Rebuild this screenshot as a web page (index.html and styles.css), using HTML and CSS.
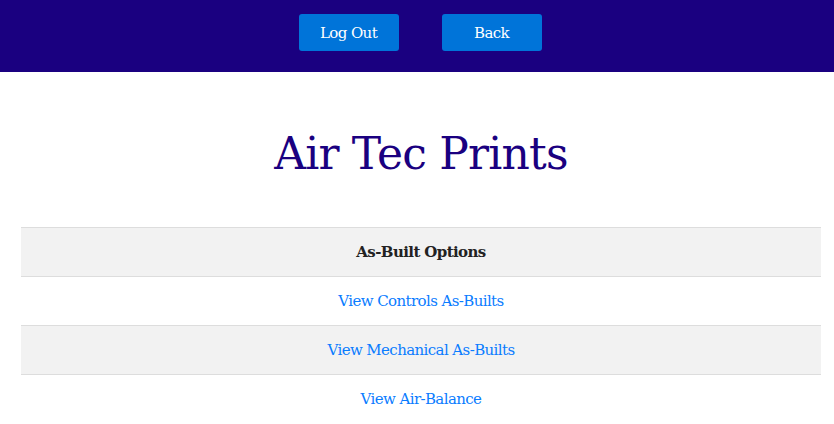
FILE: index.html
```html
<!DOCTYPE html>
<html>
<head>
<meta charset="utf-8">
<link rel="stylesheet" href="styles.css">
</head>
<body>
<header class="topbar">
  <div class="topbar-inner">
    <a class="btn" href="#">Log Out</a>
    <a class="btn" href="#">Back</a>
  </div>
</header>
<main class="page">
  <h1 class="title">Air Tec Prints</h1>
  <table class="options">
    <thead>
      <tr><th>As-Built Options</th></tr>
    </thead>
    <tbody>
      <tr><td><a href="#">View Controls As-Builts</a></td></tr>
      <tr class="alt"><td><a href="#">View Mechanical As-Builts</a></td></tr>
      <tr><td><a href="#">View Air-Balance</a></td></tr>
    </tbody>
  </table>
</main>
</body>
</html>
```

FILE: styles.css
```css
html, body {
  margin: 0;
  padding: 0;
  background: #ffffff;
  font-family: "DejaVu Serif", "Liberation Serif", serif;
}
.topbar {
  background: #1a0080;
  height: 72px;
}
.topbar-inner {
  width: 800px;
  margin-left: 20px;
  display: flex;
  justify-content: center;
  gap: 43px;
  padding-top: 14px;
}
.btn {
  display: flex;
  align-items: center;
  justify-content: center;
  width: 100px;
  height: 37px;
  background: #0074d9;
  color: #ffffff;
  border-radius: 3px;
  text-decoration: none;
  font-size: 15px;
  letter-spacing: -0.6px;
}
.page {
  width: 800px;
  margin-left: 21px;
}
.title {
  margin: 0;
  padding-top: 52px;
  height: 103px;
  box-sizing: border-box;
  text-align: center;
  color: #1a0080;
  font-weight: normal;
  font-size: 44px;
  letter-spacing: -0.8px;
  line-height: 60px;
}
.options {
  width: 800px;
  border-collapse: collapse;
  margin-top: 52px;
}
.options th, .options td {
  height: 48px;
  padding: 0;
  text-align: center;
  border-top: 1px solid #dddddd;
  font-size: 15px;
  letter-spacing: -0.6px;
}
.options th {
  background: #f2f2f2;
  color: #222222;
  font-weight: bold;
}
.options tr.alt td {
  background: #f2f2f2;
}
.options a {
  color: #0a7cff;
  text-decoration: none;
}
```
